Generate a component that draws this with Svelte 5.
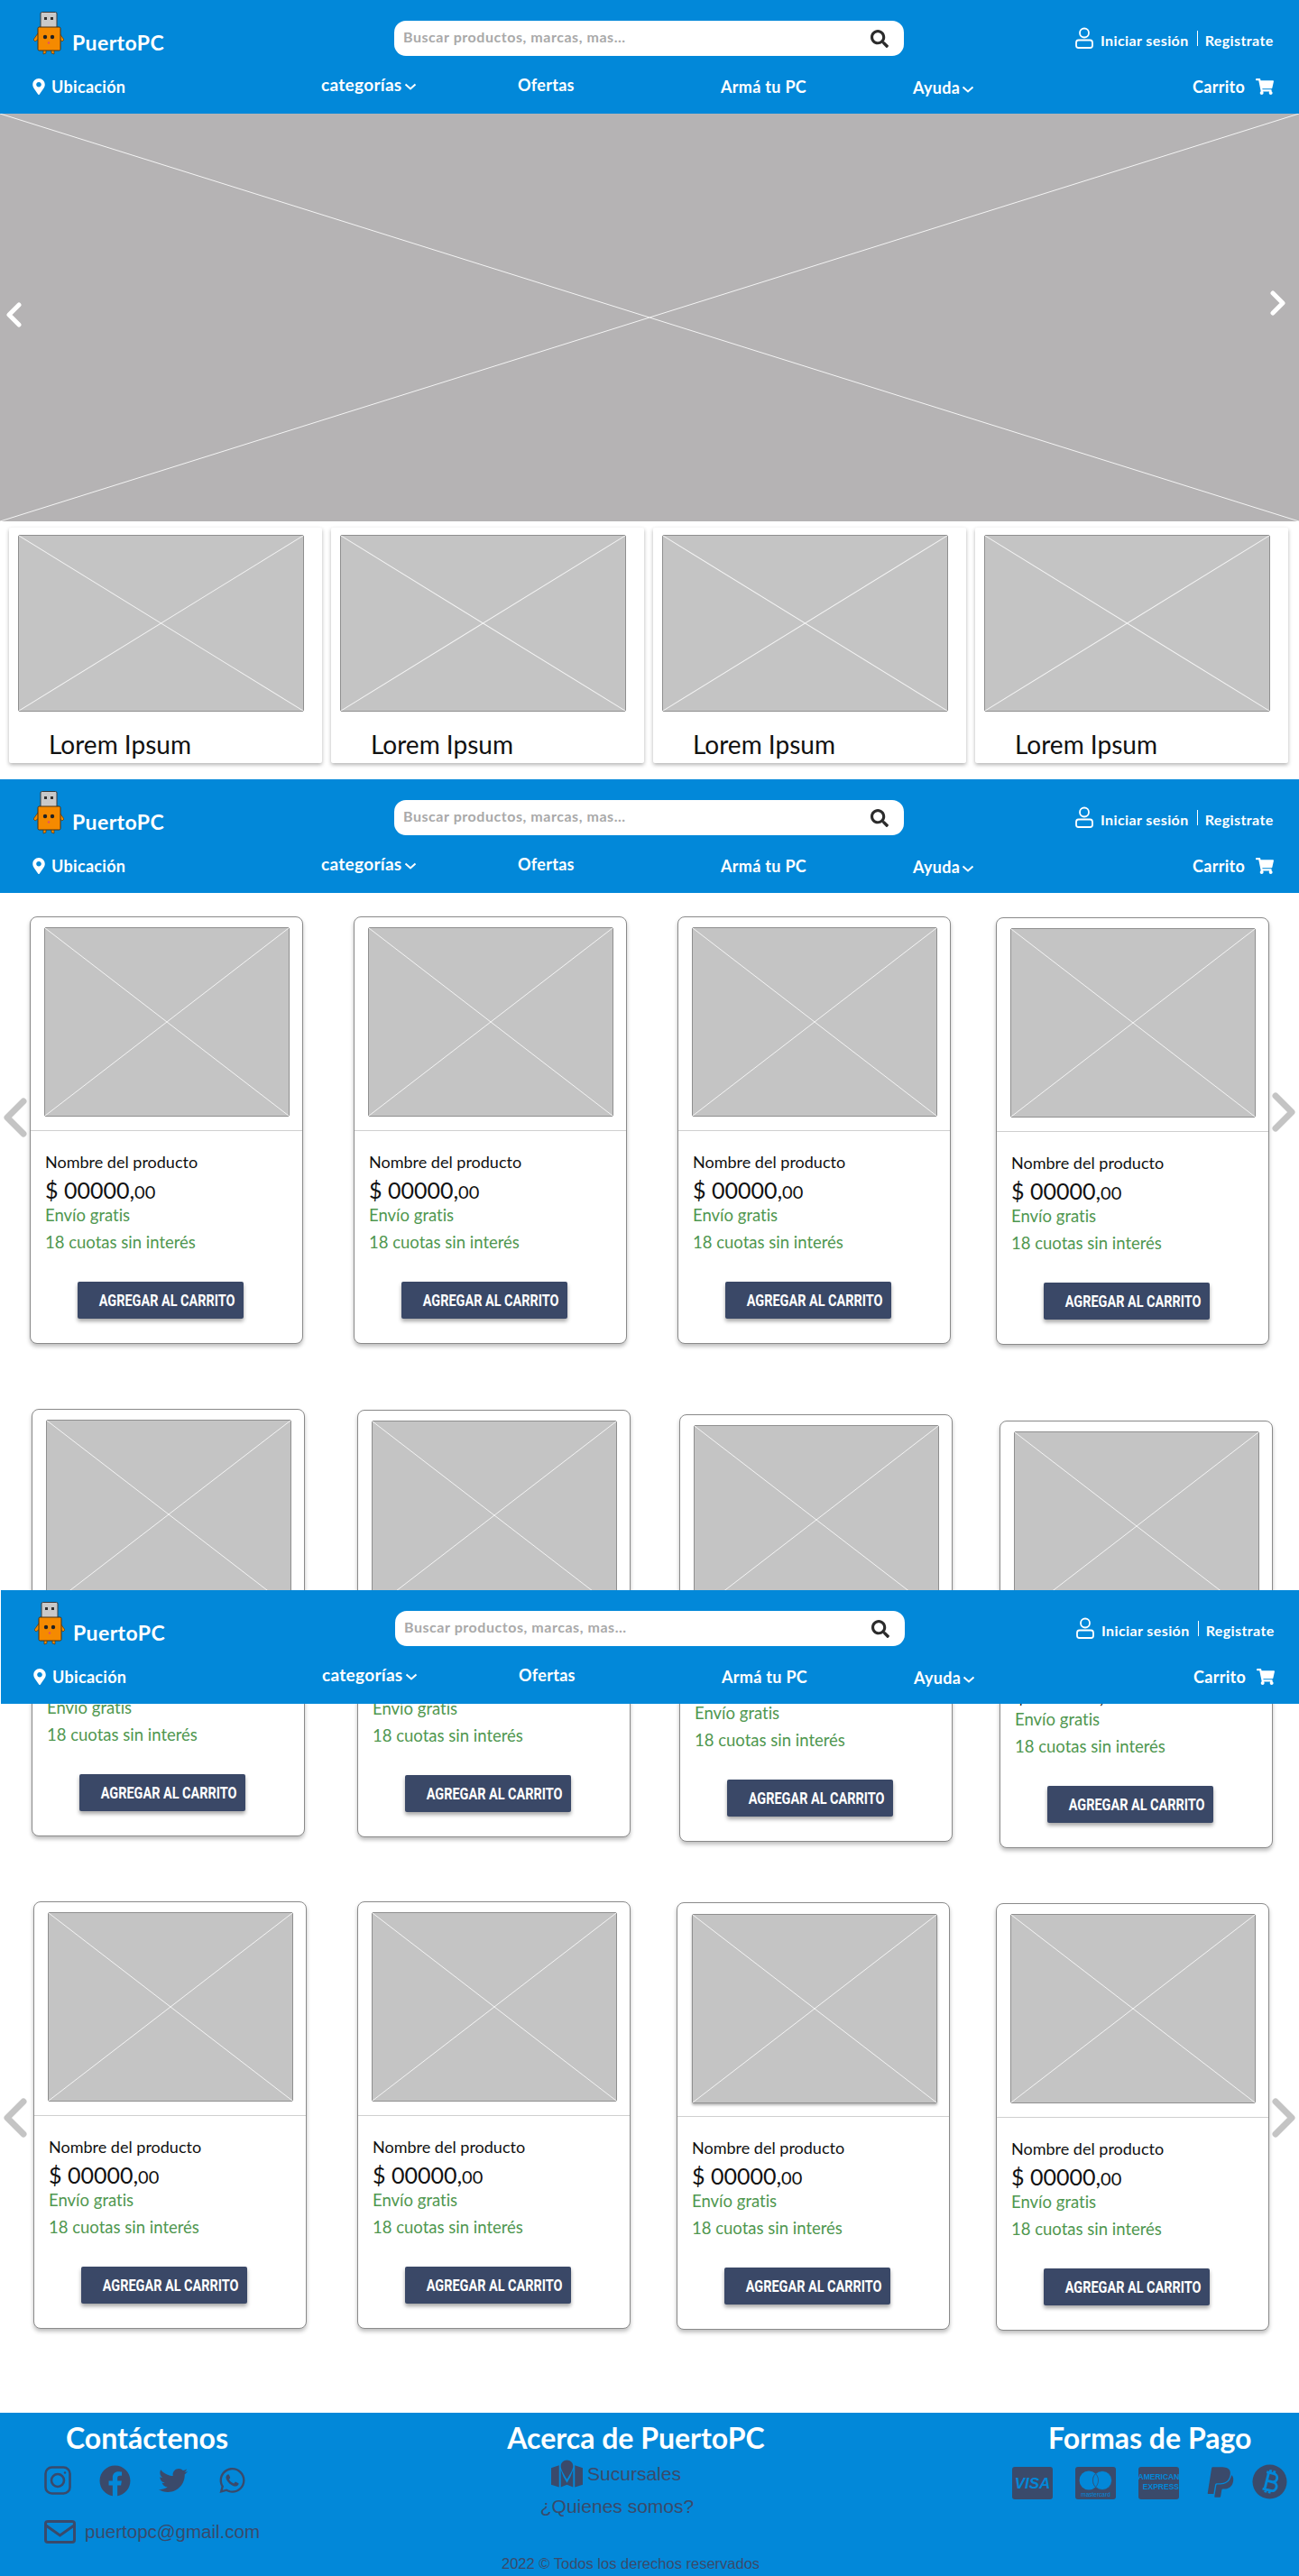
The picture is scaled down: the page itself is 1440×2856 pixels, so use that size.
<script>
  const tiles = ['Lorem Ipsum', 'Lorem Ipsum', 'Lorem Ipsum', 'Lorem Ipsum'];

  // the mockup's cards were placed by hand, so each one keeps its own nudge
  const rows = [
    {
      top: 26,
      arrowY: [201, 195],
      cards: [
        { gap: 33, drop: 0 },
        { gap: 56, drop: 0 },
        { gap: 56, drop: 0 },
        { gap: 50, drop: 1 }
      ]
    },
    {
      top: 70,
      cards: [
        { gap: 35, drop: 0 },
        { gap: 58, drop: 1 },
        { gap: 54, drop: 6 },
        { gap: 52, drop: 13 }
      ]
    },
    {
      top: 70,
      arrowY: [218, 218],
      cards: [
        { gap: 37, drop: 0 },
        { gap: 56, drop: 0 },
        { gap: 51, drop: 1, raised: true },
        { gap: 51, drop: 2 }
      ]
    }
  ];
</script>

{#snippet placeholder(cls)}
  <div class="ph {cls}">
    <svg viewBox="0 0 100 100" preserveAspectRatio="none">
      <line x1="0" y1="0" x2="100" y2="100" />
      <line x1="100" y1="0" x2="0" y2="100" />
    </svg>
  </div>
{/snippet}

{#snippet chevron()}
  <svg class="chev" viewBox="0 0 14 8"><path d="M1.5 1.5 7 6.5l5.500-5" /></svg>
{/snippet}

{#snippet siteHeader(cls)}
  <header class="site-header {cls}">
    <div class="top">
      <div class="brand">
        <svg class="logo" viewBox="0 0 34 48">
          <rect x="8" y="0.500" width="18" height="18" rx="1.500" fill="#c9c9c9" stroke="#3a3a3a" />
          <rect x="12" y="6" width="3" height="3" fill="#333" />
          <rect x="19" y="6" width="3" height="3" fill="#333" />
          <path d="M5 24 0 31l2 2 4-3zM29 24l5 7-2 2-4-3z" fill="#f08a00" stroke="#5a3a10" stroke-width=".7" />
          <path d="M11 42v5l3-1v-4zM20 42v4l3 1v-5z" fill="#f08a00" stroke="#5a3a10" stroke-width=".7" />
          <rect x="5" y="17" width="25" height="26" rx="1.500" fill="#f58a00" stroke="#4a3010" />
          <circle cx="13" cy="28" r="2.200" fill="#222" />
          <circle cx="21" cy="28" r="2.200" fill="#222" />
          <circle cx="17" cy="34.500" r="1.200" fill="#e0506a" />
        </svg>
        <span class="brand-name">PuertoPC</span>
      </div>
      <div class="search">
        <span>Buscar productos, marcas, mas...</span>
        <svg viewBox="0 0 512 512"><path fill="#2b2b2b" d="M505 442.700 405.300 343c-4.500-4.500-10.600-7-17-7H372c27.600-35.300 44-79.700 44-128C416 93.100 322.900 0 208 0S0 93.100 0 208s93.100 208 208 208c48.300 0 92.700-16.400 128-44v16.300c0 6.400 2.500 12.500 7 17l99.700 99.700c9.400 9.400 24.600 9.400 33.900 0l28.300-28.300c9.400-9.400 9.400-24.600.1-34zM208 336c-70.700 0-128-57.200-128-128 0-70.700 57.200-128 128-128 70.700 0 128 57.200 128 128 0 70.700-57.200 128-128 128z" /></svg>
      </div>
      <div class="account">
        <svg viewBox="0 0 20 24" fill="none" stroke="#fff" stroke-width="1.800">
          <circle cx="10" cy="6.500" r="5" />
          <path d="M3.500 14.500h13q2.500 0 2.500 3v3q0 2.500-2.500 2.500h-13Q1 23 1 20.500v-3q0-3 2.500-3z" />
        </svg>
        <span class="login">Iniciar sesión</span>
        <i class="sep"></i>
        <span>Registrate</span>
      </div>
    </div>
    <nav class="nav">
      <span class="ubic">
        <svg viewBox="0 0 384 512"><path fill="#fff" d="M172.268 501.670C26.970 291.031 0 268.413 0 192 0 85.961 85.961 0 192 0s192 85.961 192 192c0 76.413-26.970 99.031-172.268 309.670-9.535 13.774-29.930 13.773-39.464 0zM192 272c44.183 0 80-35.817 80-80s-35.817-80-80-80-80 35.817-80 80 35.817 80 80 80z" /></svg>
        Ubicación
      </span>
      <span class="cat">categorías{@render chevron()}</span>
      <span class="ofertas">Ofertas</span>
      <span class="arma">Armá tu PC</span>
      <span class="ayuda">Ayuda{@render chevron()}</span>
      <span class="carrito">
        Carrito
        <svg viewBox="0 0 576 512"><path fill="#fff" d="M528.120 301.319l47.273-208C578.806 78.301 567.391 64 551.990 64H159.208l-9.166-44.810C147.758 8.021 137.930 0 126.529 0H24C10.745 0 0 10.745 0 24v16c0 13.255 10.745 24 24 24h69.883l70.248 343.435C147.325 417.100 136 435.222 136 456c0 30.928 25.072 56 56 56s56-25.072 56-56c0-15.674-6.447-29.835-16.824-40h209.647C430.447 426.165 424 440.326 424 456c0 30.928 25.072 56 56 56s56-25.072 56-56c0-22.172-12.888-41.332-31.579-50.405l5.517-24.276c3.413-15.018-8.002-29.319-23.403-29.319H218.117l-6.545-32h293.145c11.206 0 20.920-7.754 23.403-18.681z" /></svg>
      </span>
    </nav>
  </header>
{/snippet}

{#snippet productCard(raised)}
  {@render placeholder(raised ? 'card-img raised' : 'card-img')}
  <div class="info">
    <p class="name">Nombre del producto</p>
    <p class="price">$ 00000,<small>00</small></p>
    <p class="green">Envío gratis</p>
    <p class="green cuotas">18 cuotas sin interés</p>
    <button type="button"><span>AGREGAR AL CARRITO</span></button>
  </div>
{/snippet}

<div class="page">
  {@render siteHeader('')}

  <section class="hero">
    {@render placeholder('hero-img')}
    <svg class="hero-arrow left" viewBox="0 0 18 28"><path d="M15 3 4 14l11 11" /></svg>
    <svg class="hero-arrow right" viewBox="0 0 18 28"><path d="M3 3l11 11L3 25" /></svg>
  </section>

  <section class="tiles">
    {#each tiles as label}
      <article class="tile">
        {@render placeholder('tile-img')}
        <p>{label}</p>
      </article>
    {/each}
  </section>

  {@render siteHeader('')}

  <section class="products">
    {#each rows as row}
      <div class="row" style="margin-top: {row.top}px">
        {#each row.cards as card}
          <article class="card" style="margin-left: {card.gap}px; margin-top: {card.drop}px">
            {@render productCard(card.raised)}
          </article>
        {/each}
        {#if row.arrowY}
          <svg class="row-arrow left" style="top: {row.arrowY[0]}px" viewBox="0 0 28 44"><path d="M24 4 6 22l18 18" /></svg>
          <svg class="row-arrow right" style="top: {row.arrowY[1]}px" viewBox="0 0 28 44"><path d="M4 4l18 18L4 40" /></svg>
        {/if}
      </div>
    {/each}
    {@render siteHeader('floating')}
  </section>

  <footer class="footer">
    <div class="col contact">
      <h3>Contáctenos</h3>
      <div class="social">
        <svg class="ig" viewBox="0 0 30 32" fill="none" stroke="#3a4a6b" stroke-width="2.600">
          <rect x="1.500" y="1.500" width="27" height="29" rx="7" />
          <circle cx="15" cy="16" r="7" />
          <circle cx="23" cy="7.500" r="1.200" fill="#3a4a6b" stroke="none" />
        </svg>
        <svg class="fb" viewBox="0 0 512 512"><path fill="#3a4a6b" d="M504 256C504 119 393 8 256 8S8 119 8 256c0 123.780 90.690 226.380 209.250 245V327.690h-63V256h63v-54.640c0-62.150 37-96.480 93.670-96.480 27.140 0 55.520 4.840 55.520 4.840v61h-31.280c-30.800 0-40.410 19.120-40.410 38.730V256h68.780l-11 71.690h-57.780V501C413.310 482.380 504 379.780 504 256z" /></svg>
        <svg class="tw" viewBox="0 0 512 512"><path fill="#3a4a6b" d="M459.370 151.716c.325 4.548.325 9.097.325 13.645 0 138.720-105.583 298.558-298.558 298.558-59.452 0-114.680-17.219-161.137-47.106 8.447.974 16.568 1.299 25.340 1.299 49.055 0 94.213-16.568 130.274-44.832-46.132-.975-84.792-31.188-98.112-72.772 6.498.974 12.995 1.624 19.818 1.624 9.421 0 18.843-1.300 27.614-3.573-48.081-9.747-84.143-51.980-84.143-102.985v-1.299c13.969 7.797 30.214 12.670 47.431 13.319-28.264-18.843-46.781-51.005-46.781-87.391 0-19.492 5.197-37.360 14.294-52.954 51.655 63.675 129.300 105.258 216.365 109.807-1.624-7.797-2.599-15.918-2.599-24.040 0-57.828 46.782-104.934 104.934-104.934 30.213 0 57.502 12.670 76.670 33.137 23.715-4.548 46.456-13.320 66.599-25.340-7.798 24.366-24.366 44.833-46.132 57.827 21.117-2.273 41.584-8.122 60.426-16.243-14.292 20.791-32.161 39.308-52.628 54.253z" /></svg>
        <svg class="wa" viewBox="0 0 448 512"><path fill="#3a4a6b" d="M380.900 97.100C339 55.100 283.200 32 223.900 32c-122.400 0-222 99.600-222 222 0 39.100 10.200 77.300 29.600 111L0 480l117.700-30.900c32.400 17.700 68.900 27 106.100 27h.1c122.300 0 224.100-99.600 224.100-222 0-59.300-25.200-115-67.100-157zm-157 341.600c-33.200 0-65.700-8.900-94-25.700l-6.700-4-69.800 18.300L72 359.200l-4.400-7c-18.500-29.400-28.200-63.300-28.200-98.200 0-101.700 82.800-184.500 184.600-184.500 49.300 0 95.600 19.200 130.400 54.100 34.800 34.900 56.200 81.200 56.100 130.500 0 101.800-84.900 184.600-186.600 184.600zm101.200-138.200c-5.500-2.800-32.800-16.200-37.900-18-5.100-1.900-8.800-2.800-12.500 2.800-3.700 5.600-14.300 18-17.600 21.800-3.200 3.700-6.500 4.200-12 1.400-32.600-16.300-54-29.100-75.500-66-5.700-9.800 5.700-9.100 16.300-30.300 1.800-3.700.9-6.900-.5-9.700-1.400-2.800-12.500-30.100-17.100-41.200-4.500-10.800-9.100-9.300-12.500-9.500-3.200-.2-6.900-.2-10.600-.2-3.700 0-9.700 1.400-14.800 6.900-5.100 5.600-19.400 19-19.400 46.300 0 27.300 19.900 53.700 22.600 57.400 2.800 3.700 39.100 59.700 94.800 83.800 35.200 15.200 49 16.500 66.600 13.900 10.700-1.600 32.800-13.400 37.400-26.400 4.600-13 4.600-24.100 3.200-26.400-1.300-2.500-5-3.900-10.500-6.600z" /></svg>
      </div>
      <div class="mail">
        <svg viewBox="0 0 35 26" fill="none" stroke="#3a4a6b" stroke-width="3">
          <rect x="1.500" y="1.500" width="32" height="23" rx="2.500" />
          <path d="M2 6l15.500 11L33 6" />
        </svg>
        <span>puertopc@gmail.com</span>
      </div>
    </div>

    <div class="col about">
      <h3>Acerca de PuertoPC</h3>
      <div class="link suc">
        <svg viewBox="0 0 36 31"><path fill="#3a4a6b" d="M0 9l9-3v25l-9-3zM27 6l9 3v19l-9 3zM11 11l3 8 4 7 4-7 3-8v20l-7-3-7 3zM18 0c4 0 7 3 7 7 0 4-4 10-7 15-3-5-7-11-7-15 0-4 3-7 7-7z" /></svg>
        <span>Sucursales</span>
      </div>
      <div class="link quien">¿Quienes somos?</div>
      <div class="copy">2022 © Todos los derechos reservados</div>
    </div>

    <div class="col pay">
      <h3>Formas de Pago</h3>
      <div class="pay-icons">
        <svg class="pay-card" viewBox="0 0 45 36">
          <rect width="45" height="36" rx="3" fill="#3a4a6b" />
          <text x="22.500" y="24" class="visa">VISA</text>
        </svg>
        <svg class="pay-card" viewBox="0 0 45 36">
          <rect width="45" height="36" rx="3" fill="#3a4a6b" />
          <circle cx="15" cy="15" r="10.500" fill="#0288d9" />
          <circle cx="30" cy="15" r="10.500" fill="#0288d9" stroke="#3a4a6b" stroke-width=".7" />
          <path d="M22.500 7.600c-4 4-4 10.800 0 14.800 4-4 4-10.800 0-14.800z" fill="#0288d9" stroke="#3a4a6b" stroke-width=".7" />
          <text x="22.500" y="33" class="mc">mastercard</text>
        </svg>
        <svg class="pay-card" viewBox="0 0 45 36">
          <rect width="45" height="36" rx="3" fill="#3a4a6b" />
          <text x="22.500" y="14" class="amex">AMERICAN</text>
          <text x="45" y="25" class="amex end">EXPRESS</text>
        </svg>
        <svg class="paypal" viewBox="0 0 384 512"><path fill="#3a4a6b" d="M111.400 295.900c-3.500 19.200-17.400 108.700-21.500 134-.3 1.800-1 2.500-3 2.500H12.300c-7.600 0-13.100-6.600-12.100-13.900L58.800 46.600c1.500-9.600 10.100-16.900 20-16.900 152.300 0 165.100-3.700 204 11.400 60.100 23.300 65.600 79.500 44 140.300-21.500 62.600-72.500 89.500-140.100 90.300-43.400.7-69.500-7-75.300 24.200zM357.100 152c-1.800-1.300-2.500-1.800-3 1.300-2 11.400-5.100 22.500-8.800 33.600-39.900 113.800-150.500 103.900-204.500 103.900-6.100 0-10.100 3.300-10.900 9.400-22.600 140.400-27.100 169.700-27.100 169.700-1 7.100 3.500 12.900 10.600 12.900h63.500c8.600 0 15.700-6.300 17.400-14.900.7-5.400-1.100 6.100 14.400-91.300 4.600-22 14.300-19.700 29.300-19.700 71 0 126.400-28.800 142.900-112.300 6.500-34.800 4.600-71.400-23.800-92.600z" /></svg>
        <svg class="btc" viewBox="0 0 40 40">
          <circle cx="20" cy="20" r="19.500" fill="#3a4a6b" />
          <g transform="rotate(14 20 20)" fill="none" stroke="#0288d9" stroke-width="3">
            <path d="M14 10h8.500a4.500 4.500 0 0 1 0 9.500H16M16 19.500h8a5 5 0 0 1 0 10H14M16.500 10v19.500M18 6.500V10M22.500 6.500V10M18 29.500V33M22.500 29.500V33" />
          </g>
        </svg>
      </div>
    </div>
  </footer>
</div>

<style>
  :global(body) {
    margin: 0;
    background: #fff;
  }

  .page {
    position: relative;
    width: 1440px;
    height: 2856px;
    overflow: hidden;
    font-family: Lato, "Open Sans", sans-serif;
    font-variant-ligatures: none;
  }

  p {
    margin: 0;
  }

  /* header */
  .site-header {
    box-sizing: border-box;
    width: 1440px;
    height: 126px;
    background: #0288d9;
    color: #fff;
    font-weight: 700;
  }

  .site-header.floating {
    position: absolute;
    top: 773px;
    left: 1px;
  }

  .top {
    display: flex;
    height: 72px;
  }

  .brand {
    display: flex;
    align-items: flex-end;
    width: 437px;
    height: 61px;
    padding: 13px 0 0 37px;
    box-sizing: border-box;
  }

  .logo {
    width: 34px;
    height: 48px;
  }

  .brand-name {
    margin: 0 0 1px 9px;
    font-size: 23px;
    line-height: 26px;
    letter-spacing: .4px;
  }

  .search {
    display: flex;
    align-items: center;
    justify-content: space-between;
    box-sizing: border-box;
    width: 565px;
    height: 39px;
    margin-top: 23px;
    padding: 0 17px 0 10px;
    background: #fff;
    border-radius: 13px;
    color: #a9a9a9;
    font-size: 16px;
    letter-spacing: .55px;
  }

  .search span {
    margin-top: -5px;
  }

  .search svg {
    width: 20px;
    height: 20px;
  }

  .account {
    display: flex;
    align-items: center;
    height: 24px;
    margin: 30px 0 0 190px;
    font-size: 16px;
    letter-spacing: .4px;
    white-space: nowrap;
  }

  .account svg {
    width: 20px;
    height: 24px;
    margin-right: 8px;
  }

  .account span {
    margin-top: 5px;
  }

  .sep {
    width: 1px;
    height: 17px;
    margin: 0 8px 0 9px;
    background: #fff;
  }

  .nav {
    display: grid;
    grid-template-columns: 356px 218px 225px 213px 310px 1fr;
    font-size: 18px;
    line-height: 22px;
    letter-spacing: .3px;
    white-space: nowrap;
  }

  .nav > span {
    display: flex;
    align-items: center;
  }

  .ubic {
    padding-left: 36px;
    margin-top: 11px;
  }

  .ubic svg {
    width: 14px;
    height: 18px;
    margin-right: 7px;
  }

  .cat {
    font-size: 19px;
  }

  .cat,
  .ofertas {
    margin-top: 8px;
  }

  .arma {
    margin-top: 12px;
  }

  .ayuda {
    margin-top: 14px;
  }

  .carrito {
    margin-top: 12px;
  }

  .carrito svg {
    width: 20px;
    height: 18px;
    margin-left: 12px;
  }

  .chev {
    width: 14px;
    height: 8px;
    margin: 4px 0 0 2px;
    fill: none;
    stroke: #fff;
    stroke-width: 2;
  }

  /* wireframe image */
  .ph {
    box-sizing: border-box;
    background: #c4c4c4;
    border: 1px solid #8f8f8f;
    border-radius: 2px;
  }

  .ph svg {
    display: block;
    width: 100%;
    height: 100%;
  }

  .ph line {
    stroke: #f4f4f4;
    stroke-width: 1;
    vector-effect: non-scaling-stroke;
  }

  /* hero */
  .hero {
    position: relative;
    height: 452px;
  }

  .hero-img {
    height: 100%;
    background: #b5b3b4;
    border: 0;
    border-radius: 0;
  }

  .hero-arrow {
    position: absolute;
    width: 18px;
    height: 28px;
    fill: none;
    stroke: #fff;
    stroke-width: 5;
    stroke-linecap: round;
    stroke-linejoin: round;
  }

  .hero-arrow.left {
    left: 6px;
    top: 209px;
  }

  .hero-arrow.right {
    left: 1408px;
    top: 196px;
  }

  /* tiles */
  .tiles {
    display: flex;
    gap: 10px;
    height: 286px;
    box-sizing: border-box;
    padding: 7px 0 0 10px;
  }

  .tile {
    box-sizing: border-box;
    width: 347px;
    height: 261px;
    padding: 8px 0 0 10px;
    background: #fff;
    border-radius: 2px;
    box-shadow: 0 2px 4px rgba(0, 0, 0, .3);
  }

  .tile-img {
    width: 317px;
    height: 196px;
  }

  .tile p {
    margin: 16px 0 0 34px;
    font-size: 28px;
    line-height: 40px;
    color: #111;
  }

  /* products */
  .products {
    position: relative;
    display: flow-root;
    height: 1685px;
  }

  .row {
    position: relative;
    display: flex;
    align-items: flex-start;
    height: 476px;
  }

  .card {
    flex: none;
    box-sizing: border-box;
    width: 303px;
    height: 474px;
    background: #fff;
    border: 1px solid #8a8a8a;
    border-radius: 8px;
    box-shadow: 0 3px 4px rgba(0, 0, 0, .25);
  }

  .card-img {
    width: 272px;
    height: 210px;
    margin: 11px 0 0 15px;
  }

  .card-img.raised {
    margin: 12px 0 -1px 16px;
    box-shadow: 0 2px 3px rgba(0, 0, 0, .3);
  }

  .info {
    margin-top: 15px;
    padding: 22px 0 0 16px;
    border-top: 1px solid #cfcfcf;
  }

  .name {
    font-size: 18px;
    line-height: 24px;
    color: #111;
  }

  .price {
    margin-top: 5px;
    font-size: 25px;
    line-height: 29px;
    color: #111;
  }

  .price small {
    font-size: 20px;
  }

  .green {
    font-size: 18.500px;
    line-height: 22px;
    color: #4f974f;
  }

  .cuotas {
    margin-top: 8px;
  }

  button {
    display: block;
    width: 184px;
    height: 41px;
    margin: 33px 0 0 36px;
    padding: 0 10px 0 0;
    border: 0;
    border-radius: 2px;
    background: #3a4867;
    box-shadow: 0 3px 4px rgba(0, 0, 0, .35);
    color: #fff;
    font-family: Roboto, "Liberation Sans", sans-serif;
    font-size: 19px;
    font-weight: 700;
  }

  /* no condensed family is installed, so squeeze the label */
  button span {
    display: inline-block;
    white-space: nowrap;
    transform: scaleX(.76);
  }

  .row-arrow {
    position: absolute;
    width: 28px;
    height: 44px;
    fill: none;
    stroke: #c4c4c4;
    stroke-width: 7;
    stroke-linecap: round;
    stroke-linejoin: round;
  }

  .row-arrow.left {
    left: 2px;
  }

  .row-arrow.right {
    left: 1410px;
  }

  /* footer */
  .footer {
    position: relative;
    display: flex;
    height: 181px;
    box-sizing: border-box;
    background: #0288d9;
    color: #3a4a6b;
    font-family: "Liberation Sans", Arial, sans-serif;
  }

  h3 {
    margin: 0;
    color: #fff;
    font-family: Lato, sans-serif;
    font-size: 32px;
    font-weight: 700;
    line-height: 36px;
    white-space: nowrap;
  }

  .col {
    display: flex;
    flex-direction: column;
    padding-top: 10px;
  }

  .contact {
    width: 516px;
    padding-left: 49px;
    box-sizing: border-box;
  }

  .contact h3 {
    margin-left: 24px;
  }

  .social {
    display: flex;
    align-items: center;
    margin-top: 12px;
    height: 34px;
  }

  .ig {
    width: 30px;
    height: 32px;
  }

  .fb {
    width: 35px;
    height: 35px;
    margin-left: 31px;
  }

  .tw {
    width: 34px;
    height: 32px;
    margin-left: 30px;
  }

  .wa {
    width: 31px;
    height: 32px;
    margin-left: 33px;
  }

  .mail {
    display: flex;
    align-items: center;
    margin-top: 27px;
    font-size: 20.500px;
  }

  .mail svg {
    width: 35px;
    height: 26px;
    margin-right: 10px;
  }

  .about {
    align-items: center;
    width: 378px;
  }

  .link {
    font-size: 21px;
    line-height: 30px;
  }

  .suc {
    display: flex;
    align-items: center;
    gap: 5px;
    margin: 6px 44px 0 0;
  }

  .suc svg {
    width: 35px;
    height: 31px;
  }

  .quien {
    margin: 6px 42px 0 0;
  }

  .copy {
    position: absolute;
    left: 556px;
    top: 158px;
    font-size: 16.500px;
    white-space: nowrap;
  }

  .pay {
    flex: 1;
  }

  .pay h3 {
    margin-left: 268px;
  }

  .pay-icons {
    display: flex;
    align-items: center;
    margin: 10px 0 0 228px;
  }

  .pay-card {
    flex: none;
    width: 45px;
    height: 36px;
    margin-right: 25px;
    margin-top: 3px;
  }

  .paypal {
    flex: none;
    width: 30px;
    height: 38px;
    margin: 2px 20px 0 6px;
  }

  .btc {
    flex: none;
    width: 39px;
    height: 39px;
  }

  text {
    font-family: "Liberation Sans", sans-serif;
    text-anchor: middle;
    fill: #0288d9;
  }

  .visa {
    font-size: 17px;
    font-weight: 700;
    font-style: italic;
  }

  .mc {
    font-size: 6.500px;
  }

  .amex {
    font-size: 8.500px;
    font-weight: 700;
  }

  .amex.end {
    text-anchor: end;
  }
</style>
